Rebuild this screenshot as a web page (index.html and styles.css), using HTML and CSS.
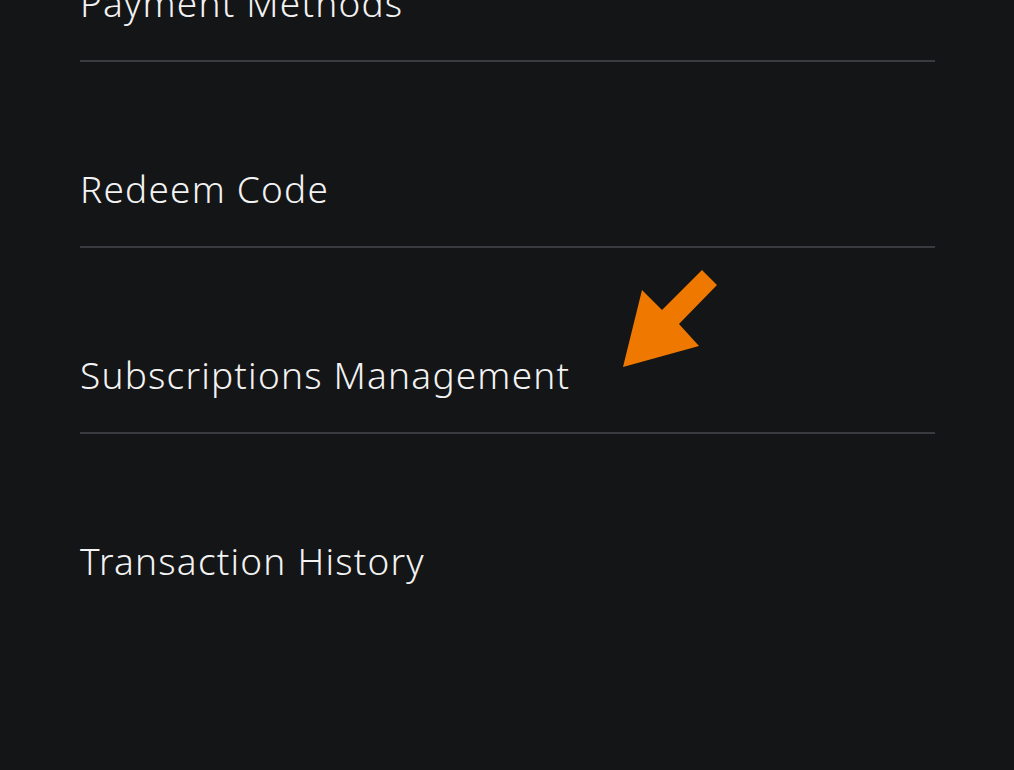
FILE: index.html
```html
<!DOCTYPE html>
<html lang="en">
    <head>
        <meta charset="UTF-8" />
        <title>Payment and Subscriptions</title>
        <link rel="stylesheet" href="styles.css">
    </head>
    <body>
        <ul class="menu-list">
            <li class="menu-item">Payment Methods</li>
            <li class="menu-item">Redeem Code</li>
            <li class="menu-item">
                Subscriptions Management
                <!-- pointer arrow -->
                <svg class="pointer-arrow" width="100" height="100" viewBox="0 0 100 100">
                    <polygon points="80,0 95,15 57,54 77,76 1,97 20,20 40,40" fill="#ee7800" />
                </svg>
            </li>
            <li class="menu-item last">Transaction History</li>
        </ul>
    </body>
</html>
```

FILE: styles.css
```css
body {
    background-color: #141517; /* near-black console background */
    color: #f2f2f2;
    font-family: 'Noto Sans', sans-serif;
    font-weight: 350;
    margin: 0;
    overflow: hidden;
}
.menu-list {
    list-style: none;
    margin: -124px 0 0 0; /* list is scrolled, first row cut off */
    padding: 0 79px 0 80px;
}
.menu-item {
    position: relative;
    height: 145px;
    padding-bottom: 39px;
    display: flex;
    align-items: flex-end;
    border-bottom: 2px solid #383b40;
    font-size: 37px;
    letter-spacing: 1.2px;
    line-height: 1;
}
.menu-item.last {
    border-bottom: none;
}
.pointer-arrow {
    position: absolute;
    left: 542px;
    top: 22px;
}
```
